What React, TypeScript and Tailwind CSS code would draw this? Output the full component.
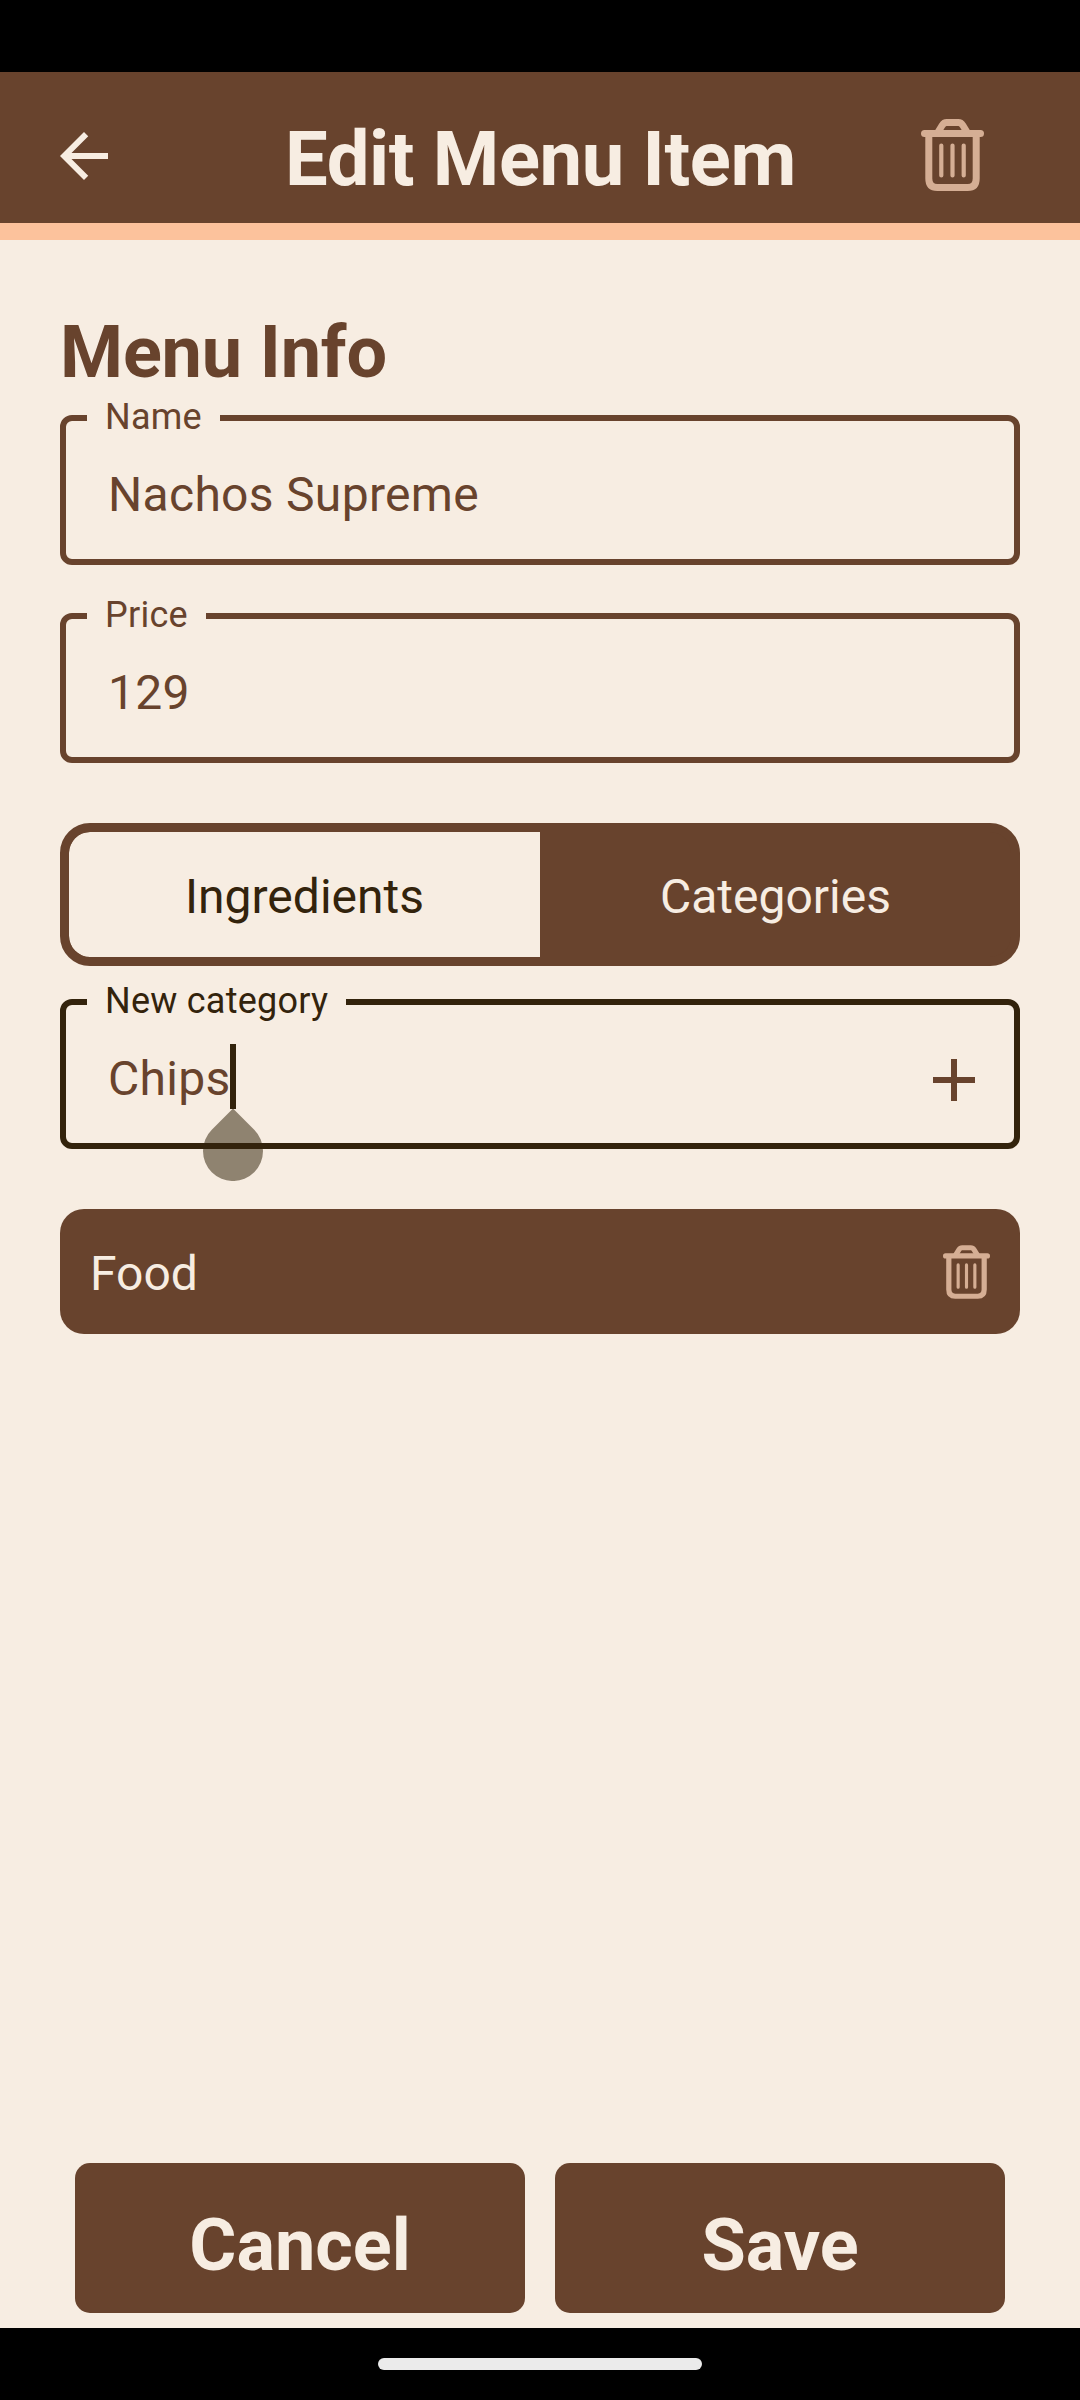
import type { ReactNode } from "react";

function BackArrow() {
  return (
    <svg viewBox="0 0 24 24" className="size-[72px]" fill="#F7EDE2">
      <path d="M20 11H7.83l5.59-5.59L12 4l-8 8 8 8 1.41-1.41L7.83 13H20v-2z" />
    </svg>
  );
}

function Trash({ className }: { className: string }) {
  return (
    <svg viewBox="0 0 63 72" className={className} fill="none" stroke="#D5AE94" strokeLinecap="round">
      <path strokeWidth="7" d="M3.5 14.5H59.5" />
      <path strokeWidth="7" strokeLinecap="butt" d="M7.8 14.5V59.5Q7.8 68.5 16.3 68.5H46.7Q55.2 68.5 55.2 59.5V14.5" />
      <path strokeWidth="7" strokeLinecap="butt" d="M16.5 14L21.2 6.3Q23 3.5 25.7 3.5H37.3Q40 3.5 41.8 6.3L46.5 14" />
      <path strokeWidth="4.2" d="M20.3 26.5V56.5M31.5 26.5V56.5M42.7 26.5V56.5" />
    </svg>
  );
}

function Field({ label, className, children }: { label: string; className: string; children: ReactNode }) {
  return (
    <div className={`relative flex h-[150px] items-center rounded-[12px] border-[6px] pl-[42px] pr-[30px] pt-[9px] ${className}`}>
      <span className="absolute left-[21px] top-[-22px] bg-[#F7EDE2] px-[18px] text-[36px] leading-[36px] tracking-[0.25px]">
        {label}
      </span>
      {children}
    </div>
  );
}

const valueText = "text-[48px] leading-[56px] tracking-[0.3px] text-[#68432D]";

export default function App() {
  return (
    <div className="flex h-[2400px] w-[1080px] flex-col bg-[#F7EDE2] font-['Roboto',sans-serif] text-[#68432D]">
      <div className="h-[72px] shrink-0 bg-black" />
      <header className="flex h-[168px] shrink-0 items-center justify-between border-b-[17px] border-[#FCC29C] bg-[#68432D] pl-[48px] pr-[96px]">
        <div className="flex w-[72px] pt-[17px]">
          <BackArrow />
        </div>
        <h1 className="ml-[40px] pt-[23px] text-[76px] font-bold leading-[88px] tracking-[-0.35px] text-[#F7EDE2]">Edit Menu Item</h1>
        <div className="pt-[15px]">
          <Trash className="h-[72px] w-[63px]" />
        </div>
      </header>

      <main className="flex grow flex-col px-[60px] pt-[71px]">
        <h2 className="text-[72px] font-bold leading-[84px] tracking-[-0.15px]">Menu Info</h2>
        <Field label="Name" className="mt-[20px] border-[#68432D]">
          <span className={valueText}>Nachos Supreme</span>
        </Field>
        <Field label="Price" className="mt-[48px] border-[#68432D]">
          <span className={valueText}>129</span>
        </Field>

        <div className="mt-[60px] flex h-[143px] overflow-hidden rounded-[30px] border-[9px] border-[#68432D] bg-[#68432D] text-[48px] leading-[56px]">
          <div className="flex flex-1 items-center justify-center rounded-l-[21px] bg-[#F7EDE2] pt-[4px] text-[#33230C]">
            Ingredients
          </div>
          <div className="flex flex-1 items-center justify-center pt-[4px] text-[#F7EDE2]">Categories</div>
        </div>

        <Field label="New category" className="mt-[33px] border-[#33230C] text-[#33230C]">
          <span className={valueText}>Chips</span>
          <span className="absolute left-[164px] top-[39px] h-[65px] w-[6px] bg-[#33230C]" />
          <svg viewBox="0 0 60 73" className="absolute left-[137px] top-[103px] h-[73px] w-[60px]">
            <path fill="#33230C" fillOpacity="0.53" d="M30 .6L51.2 21.8A30 30 0 1 1 8.8 21.8Z" />
            <path fill="#33230C" d="M0 35H60V41H0Z" />
          </svg>
          <svg viewBox="0 0 42 42" className="ml-auto mr-[9px] size-[42px] translate-y-px">
            <path stroke="#68432D" strokeWidth="6" d="M0 21H42M21 0V42" />
          </svg>
        </Field>

        <div className="mt-[60px] flex h-[125px] items-center justify-between rounded-[24px] bg-[#68432D] pl-[30px] pr-[30px]">
          <span className="pt-[4px] text-[48px] leading-[56px] text-[#F7EDE2]">Food</span>
          <Trash className="h-[54px] w-[47px]" />
        </div>

        <div className="mb-[15px] mt-auto flex gap-[30px] px-[15px] text-[72px] font-bold leading-[84px] text-[#F7EDE2]">
          <div className="flex h-[150px] flex-1 items-center justify-center rounded-[15px] bg-[#68432D] pt-[15px]">Cancel</div>
          <div className="flex h-[150px] flex-1 items-center justify-center rounded-[15px] bg-[#68432D] pt-[15px]">Save</div>
        </div>
      </main>

      <div className="flex h-[72px] shrink-0 items-center justify-center bg-black">
        <div className="h-[12px] w-[324px] rounded-full bg-[#EBEBEB]" />
      </div>
    </div>
  );
}
